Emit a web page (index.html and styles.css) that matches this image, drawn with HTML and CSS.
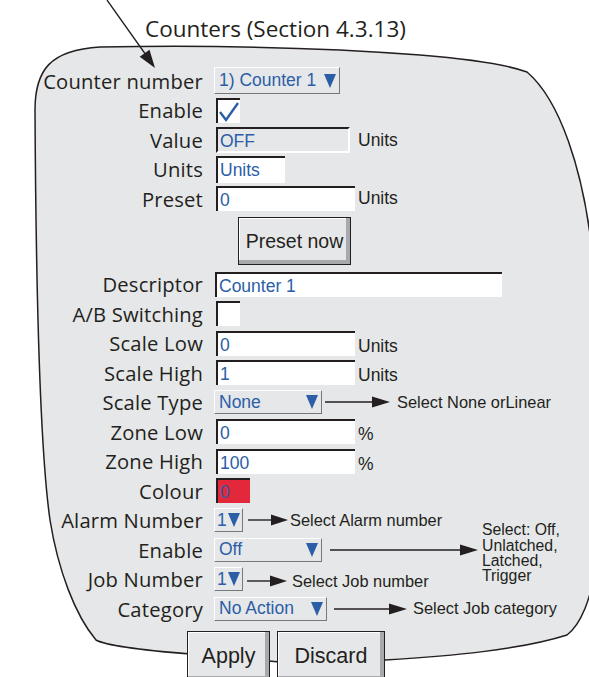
FILE: index.html
```html
<!DOCTYPE html>
<html lang="en">
<head>
  <meta charset="UTF-8">
  <title>Counters (Section 4.3.13)</title>
  <link rel="stylesheet" href="styles.css">
</head>
<body>
  <div class="sheet">
    <svg class="backdrop" width="589" height="677" viewBox="0 0 589 677">
      <path class="panel" d="M100 47 C220 45 330 48 420 55 C470 59 505 64 527 72 C560 100 583 170 592 250 L596 560 C592 600 580 625 567 635 C520 650 450 656 385 660 L280 662 L190 654 C140 650 105 645 96 640 C75 615 58 570 50 520 C40 450 36 300 35 110 C35 70 50 50 100 47 Z"/>
      <line class="pointer" x1="107" y1="0" x2="146" y2="55"/>
      <polygon class="pointer-head" points="155,68 149.5,49.8 139.7,56.8"/>
    </svg>

    <h1 class="title">Counters (Section 4.3.13)</h1>

    <div class="form">
      <div class="row">
        <span class="lbl">Counter number</span>
        <span class="sel w-counter">1) Counter 1<i class="tri"></i></span>
      </div>
      <div class="row">
        <span class="lbl">Enable</span>
        <span class="chk"><svg width="22" height="23" viewBox="0 0 22 23"><polyline points="2,12 8,20 20,3"/></svg></span>
      </div>
      <div class="row">
        <span class="lbl">Value</span>
        <span class="fld val w-value">OFF</span>
        <span class="unit gap-wide">Units</span>
      </div>
      <div class="row">
        <span class="lbl">Units</span>
        <span class="fld w-units">Units</span>
      </div>
      <div class="row">
        <span class="lbl">Preset</span>
        <span class="fld w-num">0</span>
        <span class="unit">Units</span>
      </div>

      <div class="btnrow">
        <button class="btn preset">Preset now</button>
      </div>

      <div class="row">
        <span class="lbl">Descriptor</span>
        <span class="fld w-desc">Counter 1</span>
      </div>
      <div class="row">
        <span class="lbl">A/B Switching</span>
        <span class="chk"></span>
      </div>
      <div class="row">
        <span class="lbl">Scale Low</span>
        <span class="fld w-num">0</span>
        <span class="unit low">Units</span>
      </div>
      <div class="row">
        <span class="lbl">Scale High</span>
        <span class="fld w-num">1</span>
        <span class="unit low">Units</span>
      </div>
      <div class="row">
        <span class="lbl">Scale Type</span>
        <span class="sel w-type">None<i class="tri"></i></span>
        <svg class="arw gap-3" width="65" height="12" viewBox="0 0 65 12"><line x1="0" y1="6" x2="50" y2="6"/><polygon points="47,0.5 65,6 47,11.5"/></svg>
        <span class="hint gap-7">Select None orLinear</span>
      </div>
      <div class="row">
        <span class="lbl">Zone Low</span>
        <span class="fld w-num">0</span>
        <span class="unit low">%</span>
      </div>
      <div class="row">
        <span class="lbl">Zone High</span>
        <span class="fld w-num">100</span>
        <span class="unit low">%</span>
      </div>
      <div class="row">
        <span class="lbl">Colour</span>
        <span class="fld swatch">0</span>
      </div>
      <div class="row">
        <span class="lbl">Alarm Number</span>
        <span class="sel w-small">1<i class="tri"></i></span>
        <svg class="arw gap-5" width="40" height="12" viewBox="0 0 40 12"><line x1="0" y1="6" x2="26" y2="6"/><polygon points="23,0.5 40,6 23,11.5"/></svg>
        <span class="hint gap-2">Select Alarm number</span>
      </div>
      <div class="row">
        <span class="lbl">Enable</span>
        <span class="sel w-type">Off<i class="tri"></i></span>
        <svg class="arw gap-8" width="148" height="12" viewBox="0 0 148 12"><line x1="0" y1="6" x2="134" y2="6"/><polygon points="130,0.5 148,6 130,11.5"/></svg>
        <span class="hint note">Select: Off,<br>Unlatched,<br>Latched,<br>Trigger</span>
      </div>
      <div class="row">
        <span class="lbl">Job Number</span>
        <span class="sel w-small">1<i class="tri"></i></span>
        <svg class="arw gap-4 drop" width="40" height="12" viewBox="0 0 40 12"><line x1="0" y1="6" x2="26" y2="6"/><polygon points="23,0.5 40,6 23,11.5"/></svg>
        <span class="hint gap-5 drop">Select Job number</span>
      </div>
      <div class="row">
        <span class="lbl">Category</span>
        <span class="sel w-cat">No Action<i class="tri"></i></span>
        <svg class="arw gap-7" width="73" height="12" viewBox="0 0 73 12"><line x1="0" y1="6" x2="58" y2="6"/><polygon points="55,0.5 73,6 55,11.5"/></svg>
        <span class="hint gap-6">Select Job category</span>
      </div>
    </div>

    <div class="actions">
      <button class="btn big apply">Apply</button>
      <button class="btn big discard">Discard</button>
    </div>
  </div>
</body>
</html>
```

FILE: styles.css
```css
body {
  margin: 0;
  background: #fff;
  color: #231f20;
  font-family: 'Open Sans', sans-serif;
}
.sheet {
  position: relative;
  width: 589px;
  height: 677px;
  overflow: hidden;
}
.backdrop {
  position: absolute;
  left: 0;
  top: 0;
}
.panel {
  fill: #e6e7e8;
  stroke: #231f20;
  stroke-width: 1.5;
}
.pointer {
  stroke: #231f20;
  stroke-width: 1.3;
}
.pointer-head {
  fill: #231f20;
}
.title, .form, .actions {
  position: relative;
}
.title {
  margin: 0 0 24px;
  padding: 16px 0 0 145px;
  font-size: 22.5px;
  font-weight: 400;
  line-height: 26px;
}

/* form rows */
.row {
  display: flex;
  align-items: center;
  height: 29.5px;
}
.lbl {
  width: 203px;
  margin-right: 11px;
  text-align: right;
  font-size: 20.2px;
  letter-spacing: 0.2px;
  white-space: nowrap;
}
.fld {
  box-sizing: border-box;
  height: 25px;
  margin-left: 2px;
  padding: 2px 0 0 2px;
  background: #fff;
  border-top: 2px solid #231f20;
  border-left: 2px solid #231f20;
  font-family: 'Liberation Sans', Arial, sans-serif;
  font-size: 17.5px;
  line-height: 21px;
  color: #2b5ea7;
}
.val {
  height: 26px;
  background: #e6e7e8;
  border-right: 2px solid #fff;
  border-bottom: 2px solid #fff;
}
.w-value { width: 134px; }
.w-units { width: 69px; height: 27px; }
.w-num { width: 139px; }
.w-desc { width: 287px; margin-left: 1px; }
.swatch {
  width: 34px;
  background: #e3283c;
}
.chk {
  box-sizing: border-box;
  width: 24px;
  height: 25px;
  margin-left: 2px;
  background: #fff;
  border-top: 2px solid #231f20;
  border-left: 2px solid #231f20;
}
.chk svg {
  display: block;
}
.chk polyline {
  fill: none;
  stroke: #2b5ea7;
  stroke-width: 2.4;
}

.sel {
  box-sizing: border-box;
  display: flex;
  align-items: center;
  justify-content: space-between;
  height: 24px;
  padding: 0 3px 0 4px;
  background: #e6e7e8;
  border: 1px solid;
  border-color: #fff #77787b #77787b #fff;
  font-family: 'Liberation Sans', Arial, sans-serif;
  font-size: 17.5px;
  color: #2b5ea7;
}
.w-counter { width: 126px; height: 27px; }
.w-type { width: 108px; }
.w-small { width: 29px; padding: 0 2px 0 2px; }
.w-cat { width: 113px; }
.tri {
  width: 0;
  height: 0;
  border-left: 6.5px solid transparent;
  border-right: 6.5px solid transparent;
  border-top: 14px solid #2b5ea7;
}

.unit, .hint {
  font-family: 'Liberation Sans', Arial, sans-serif;
  white-space: nowrap;
}
.unit {
  margin-left: 3px;
  font-size: 17.5px;
}
.hint { font-size: 16.4px; }
.unit.gap-wide { margin-left: 8px; padding-top: 1px; }
.unit.low { padding-top: 6px; }
.note {
  margin-left: 4px;
  margin-top: 7px;
  font-size: 15.8px;
  line-height: 15.4px;
}
.drop { margin-top: 4px; }

.arw line {
  stroke: #231f20;
  stroke-width: 1.4;
}
.arw polygon {
  fill: #231f20;
}
.gap-2 { margin-left: 2px; }
.gap-3 { margin-left: 3px; }
.gap-4 { margin-left: 4px; }
.gap-5 { margin-left: 5px; }
.gap-6 { margin-left: 6px; }
.gap-7 { margin-left: 7px; }
.gap-8 { margin-left: 8px; }

/* buttons */
.btn {
  box-sizing: border-box;
  padding: 0;
  background: #e6e7e8;
  border: 1px solid #231f20;
  box-shadow: inset -4px -4px 0 #a7a9ac, inset 1px 1px 0 #fff;
  color: #231f20;
  font-family: 'Liberation Sans', Arial, sans-serif;
}
.btnrow {
  box-sizing: border-box;
  height: 55.75px;
  padding: 3.5px 0 0 238px;
}
.preset {
  width: 113px;
  height: 48px;
  font-size: 19.5px;
}
.actions {
  display: flex;
  gap: 7px;
  margin-top: 7.75px;
  padding-left: 187px;
}
.big {
  height: 50px;
  font-size: 21.5px;
}
.apply { width: 83px; }
.discard { width: 108px; }
```
